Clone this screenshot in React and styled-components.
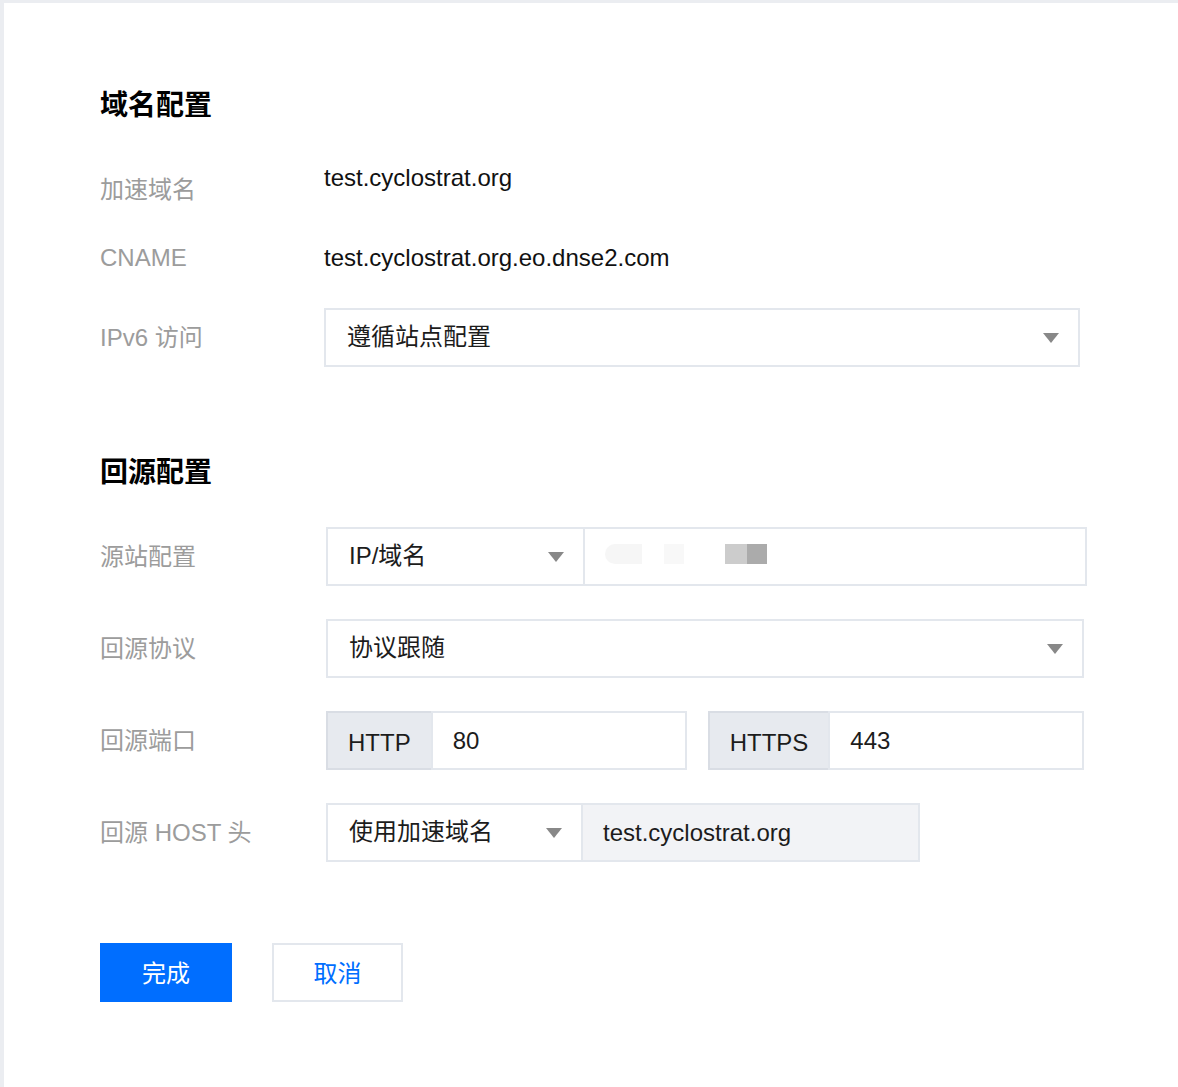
import styled, { createGlobalStyle } from "styled-components";

const GlobalStyle = createGlobalStyle`
    html, body {
        margin: 0;
        padding: 0;
        background-color: #ebedf1;
    }
    * {
        box-sizing: border-box;
    }
    body {
        font-family: "Liberation Sans", "Noto Sans CJK SC", sans-serif;
    }
`;

export default function App(){
    return(
        <>
            <GlobalStyle />
            <CardStyle>
                <TitleStyle>域名配置</TitleStyle>

                <InfoRowStyle gap={37}>
                    <LabelStyle offset={12}>加速域名</LabelStyle>
                    <ValueStyle>test.cyclostrat.org</ValueStyle>
                </InfoRowStyle>
                <InfoRowStyle gap={32}>
                    <LabelStyle>CNAME</LabelStyle>
                    <ValueStyle>test.cyclostrat.org.eo.dnse2.com</ValueStyle>
                </InfoRowStyle>
                <FieldRowStyle gap={32}>
                    <LabelStyle width={224}>IPv6 访问</LabelStyle>
                    <Select width={756} value="遵循站点配置" />
                </FieldRowStyle>

                <TitleStyle gap={83}>回源配置</TitleStyle>

                <FieldRowStyle gap={37}>
                    <LabelStyle>源站配置</LabelStyle>
                    <JoinedStyle>
                        <Select width={259} value="IP/域名" />
                        <InputBoxStyle width={504} joined>
                            <Redacted />
                        </InputBoxStyle>
                    </JoinedStyle>
                </FieldRowStyle>
                <FieldRowStyle>
                    <LabelStyle>回源协议</LabelStyle>
                    <Select width={758} value="协议跟随" />
                </FieldRowStyle>
                <FieldRowStyle>
                    <LabelStyle>回源端口</LabelStyle>
                    <PortsStyle>
                        <PortGroupStyle>
                            <AddonStyle>HTTP</AddonStyle>
                            <InputBoxStyle width={256} joined>80</InputBoxStyle>
                        </PortGroupStyle>
                        <PortGroupStyle>
                            <AddonStyle>HTTPS</AddonStyle>
                            <InputBoxStyle width={256} joined>443</InputBoxStyle>
                        </PortGroupStyle>
                    </PortsStyle>
                </FieldRowStyle>
                <FieldRowStyle>
                    <LabelStyle>回源 HOST 头</LabelStyle>
                    <JoinedStyle>
                        <Select width={257} value="使用加速域名" />
                        <InputBoxStyle width={339} joined readOnly>test.cyclostrat.org</InputBoxStyle>
                    </JoinedStyle>
                </FieldRowStyle>

                <ActionsStyle>
                    <ButtonStyle primary>完成</ButtonStyle>
                    <ButtonStyle>取消</ButtonStyle>
                </ActionsStyle>
            </CardStyle>
        </>
    );
}

function Select({ width, value }){
    return(
        <SelectStyle width={width}>
            <span>{value}</span>
            <ArrowStyle />
        </SelectStyle>
    );
}

// origin address is masked out
function Redacted(){
    return(
        <MaskStyle>
            <MaskBlockStyle w={37} color="#f6f6f6" round />
            <MaskBlockStyle w={20} color="#f8f8f8" />
            <MaskPairStyle>
                <MaskBlockStyle w={22} color="#cccccc" />
                <MaskBlockStyle w={20} color="#ababab" />
            </MaskPairStyle>
        </MaskStyle>
    );
}

const CardStyle = styled.div`
    background-color: #FFF;
    margin: 3px 0 0 4px;
    min-height: calc(100vh - 3px);
    padding: 80px 0 40px 96px;
    display: flex;
    flex-direction: column;
`;

const TitleStyle = styled.h2`
    margin: ${props => props.gap || 0}px 0 0 0;
    font-family: "Noto Sans CJK SC", sans-serif;
    font-size: 28px;
    font-weight: 700;
    line-height: 40px;
    color: #000;
`;

const InfoRowStyle = styled.div`
    display: flex;
    align-items: flex-start;
    margin-top: ${props => props.gap || 0}px;
`;

const FieldRowStyle = styled.div`
    display: flex;
    align-items: center;
    height: 59px;
    margin-top: ${props => props.gap ?? 33}px;
`;

const LabelStyle = styled.div`
    width: ${props => props.width || 226}px;
    flex-shrink: 0;
    margin-top: ${props => props.offset || 0}px;
    font-size: 24px;
    line-height: 36px;
    color: #9c9c9c;
`;

const ValueStyle = styled.div`
    margin-left: -2px;
    font-size: 24px;
    line-height: 36px;
    color: #111;
`;

const SelectStyle = styled.div`
    width: ${props => props.width}px;
    height: 59px;
    display: flex;
    align-items: center;
    justify-content: space-between;
    padding: 0 19px 0 21px;
    border: 2px solid #e3e7ed;
    background-color: #FFF;
    font-size: 24px;
    line-height: 30px;
    color: #1c1c1c;

    span{
        margin-top: -2px;
    }
`;

const ArrowStyle = styled.i`
    width: 0;
    height: 0;
    border-left: 8px solid transparent;
    border-right: 8px solid transparent;
    border-top: 10px solid #888;
`;

const JoinedStyle = styled.div`
    display: flex;
`;

const InputBoxStyle = styled.div`
    width: ${props => props.width}px;
    height: 59px;
    display: flex;
    align-items: center;
    padding: 0 20px;
    margin-left: ${props => props.joined ? "-2px" : 0};
    border: 2px solid #e3e7ed;
    background-color: ${props => props.readOnly ? "#f2f3f6" : "#FFF"};
    font-size: 24px;
    color: #1c1c1c;
`;

const MaskStyle = styled.div`
    display: flex;
    align-items: center;
    gap: 22px;
    margin-top: -6px;
`;

const MaskPairStyle = styled.div`
    display: flex;
    margin-left: 19px;
`;

const MaskBlockStyle = styled.span`
    width: ${props => props.w}px;
    height: 20px;
    background-color: ${props => props.color};
    border-radius: ${props => props.round ? "10px 0 0 10px" : 0};
`;

const PortsStyle = styled.div`
    display: flex;
    gap: 21px;
`;

const PortGroupStyle = styled.div`
    display: flex;
`;

const AddonStyle = styled.div`
    height: 59px;
    display: flex;
    align-items: center;
    padding: 4px 20px 0 20px;
    border: 2px solid #d9dde4;
    background-color: #e7eaef;
    font-size: 24px;
    color: #1c1c1c;
`;

const ActionsStyle = styled.div`
    display: flex;
    gap: 40px;
    margin-top: 81px;
`;

const ButtonStyle = styled.button`
    width: ${props => props.primary ? 132 : 131}px;
    height: 59px;
    border: 2px solid ${props => props.primary ? "#006eff" : "#e3e7ed"};
    background-color: ${props => props.primary ? "#006eff" : "#FFF"};
    color: ${props => props.primary ? "#FFF" : "#006eff"};
    font-family: "Noto Sans CJK SC", sans-serif;
    font-size: 24px;
    line-height: 30px;
    padding: 0 0 2px 0;
    cursor: pointer;
`;
